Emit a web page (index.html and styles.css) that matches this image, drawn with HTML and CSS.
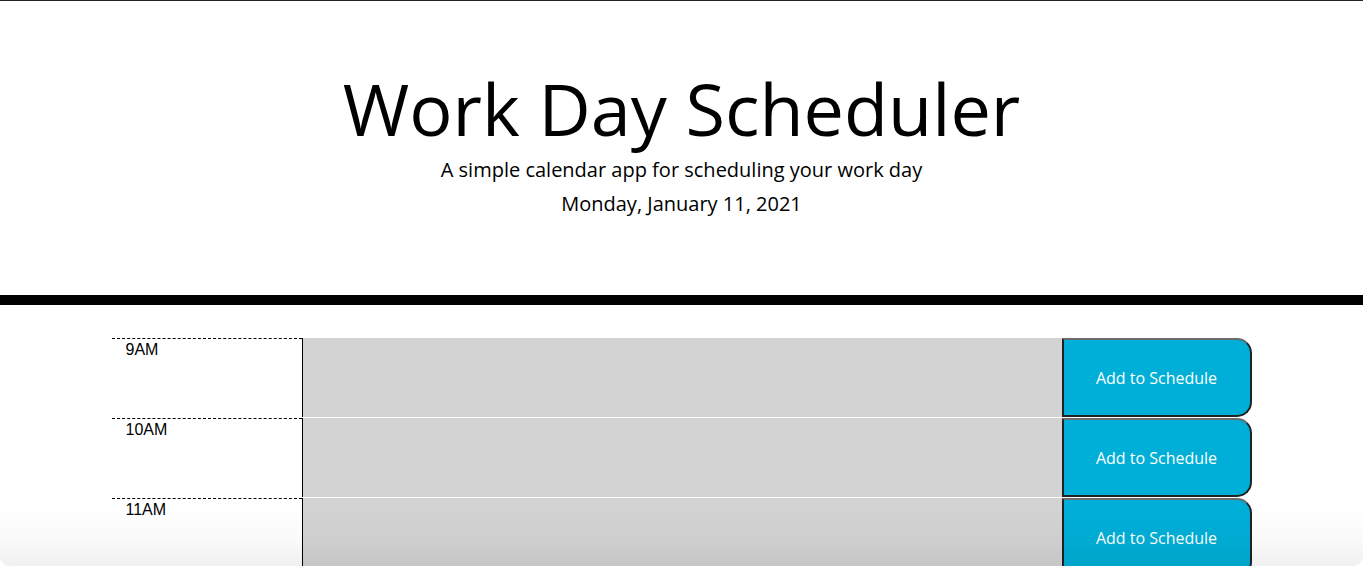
FILE: index.html
```html
<!DOCTYPE html>
<html lang="en">
<head>
<meta charset="utf-8">
<title>Work Day Scheduler</title>
<link rel="stylesheet" href="styles.css">
</head>
<body>
<header class="jumbotron">
  <h1 class="display">Work Day Scheduler</h1>
  <p class="lead lead-sub">A simple calendar app for scheduling your work day</p>
  <p class="lead lead-date">Monday, January 11, 2021</p>
</header>
<main class="container">
  <div class="row">
    <div class="hour">9AM</div>
    <textarea class="description past"></textarea>
    <button class="saveBtn">Add to Schedule</button>
  </div>
  <div class="row">
    <div class="hour">10AM</div>
    <textarea class="description past"></textarea>
    <button class="saveBtn">Add to Schedule</button>
  </div>
  <div class="row">
    <div class="hour">11AM</div>
    <textarea class="description past"></textarea>
    <button class="saveBtn">Add to Schedule</button>
  </div>
</main>
<div class="window-shade"></div>
</body>
</html>
```
FILE: styles.css
```css
* { box-sizing: border-box; }
html, body { margin: 0; padding: 0; }
body {
  font-family: "Open Sans", sans-serif;
  color: #000;
  background: #fff;
  border-top: 1px solid #222;
  overflow: hidden;
  height: 566px;
}
.jumbotron {
  text-align: center;
  padding: 64px 32px 64px;
  border-bottom: 10px solid #000;
  margin-bottom: 32px;
}
.display {
  font-size: 72px;
  font-weight: 400;
  line-height: 1.2;
  margin: 0 0 4px;
}
.lead {
  font-size: 20px;
  font-weight: 400;
  line-height: 1.5;
  margin: 0;
}
.lead-sub { margin-bottom: 4px; }
.lead-date { margin-bottom: 12px; }
.container {
  width: 1140px;
  margin: 0 auto;
}
.row {
  display: flex;
  height: 80px;
  border-top: 1px solid #fff;
}
.hour {
  width: 190px;
  flex: none;
  border-top: 1px dashed #000;
  font-family: "Liberation Sans", Arial, sans-serif;
  font-size: 16px;
  line-height: 1.4;
  padding: 0 14px;
  text-align: left;
}
.description {
  flex: 1;
  background: #d3d3d3;
  border: none;
  border-left: 1px solid #000;
  margin: 0;
  resize: none;
  font-family: "Open Sans", sans-serif;
}
.saveBtn {
  width: 190px;
  flex: none;
  background: #00afd7;
  color: #fff;
  font-family: "Open Sans", sans-serif;
  font-size: 16px;
  border: 2px solid #222;
  border-top-color: #6b6b6b;
  border-radius: 0 15px 15px 0;
  margin: 0;
  padding: 0;
}
.window-shade {
  position: fixed;
  left: 0;
  right: 0;
  bottom: 0;
  height: 60px;
  pointer-events: none;
  background: linear-gradient(to bottom, rgba(0,0,0,0) 0%, rgba(0,0,0,0.02) 55%, rgba(0,0,0,0.06) 100%);
  border-radius: 0 0 10px 10px;
}
```
